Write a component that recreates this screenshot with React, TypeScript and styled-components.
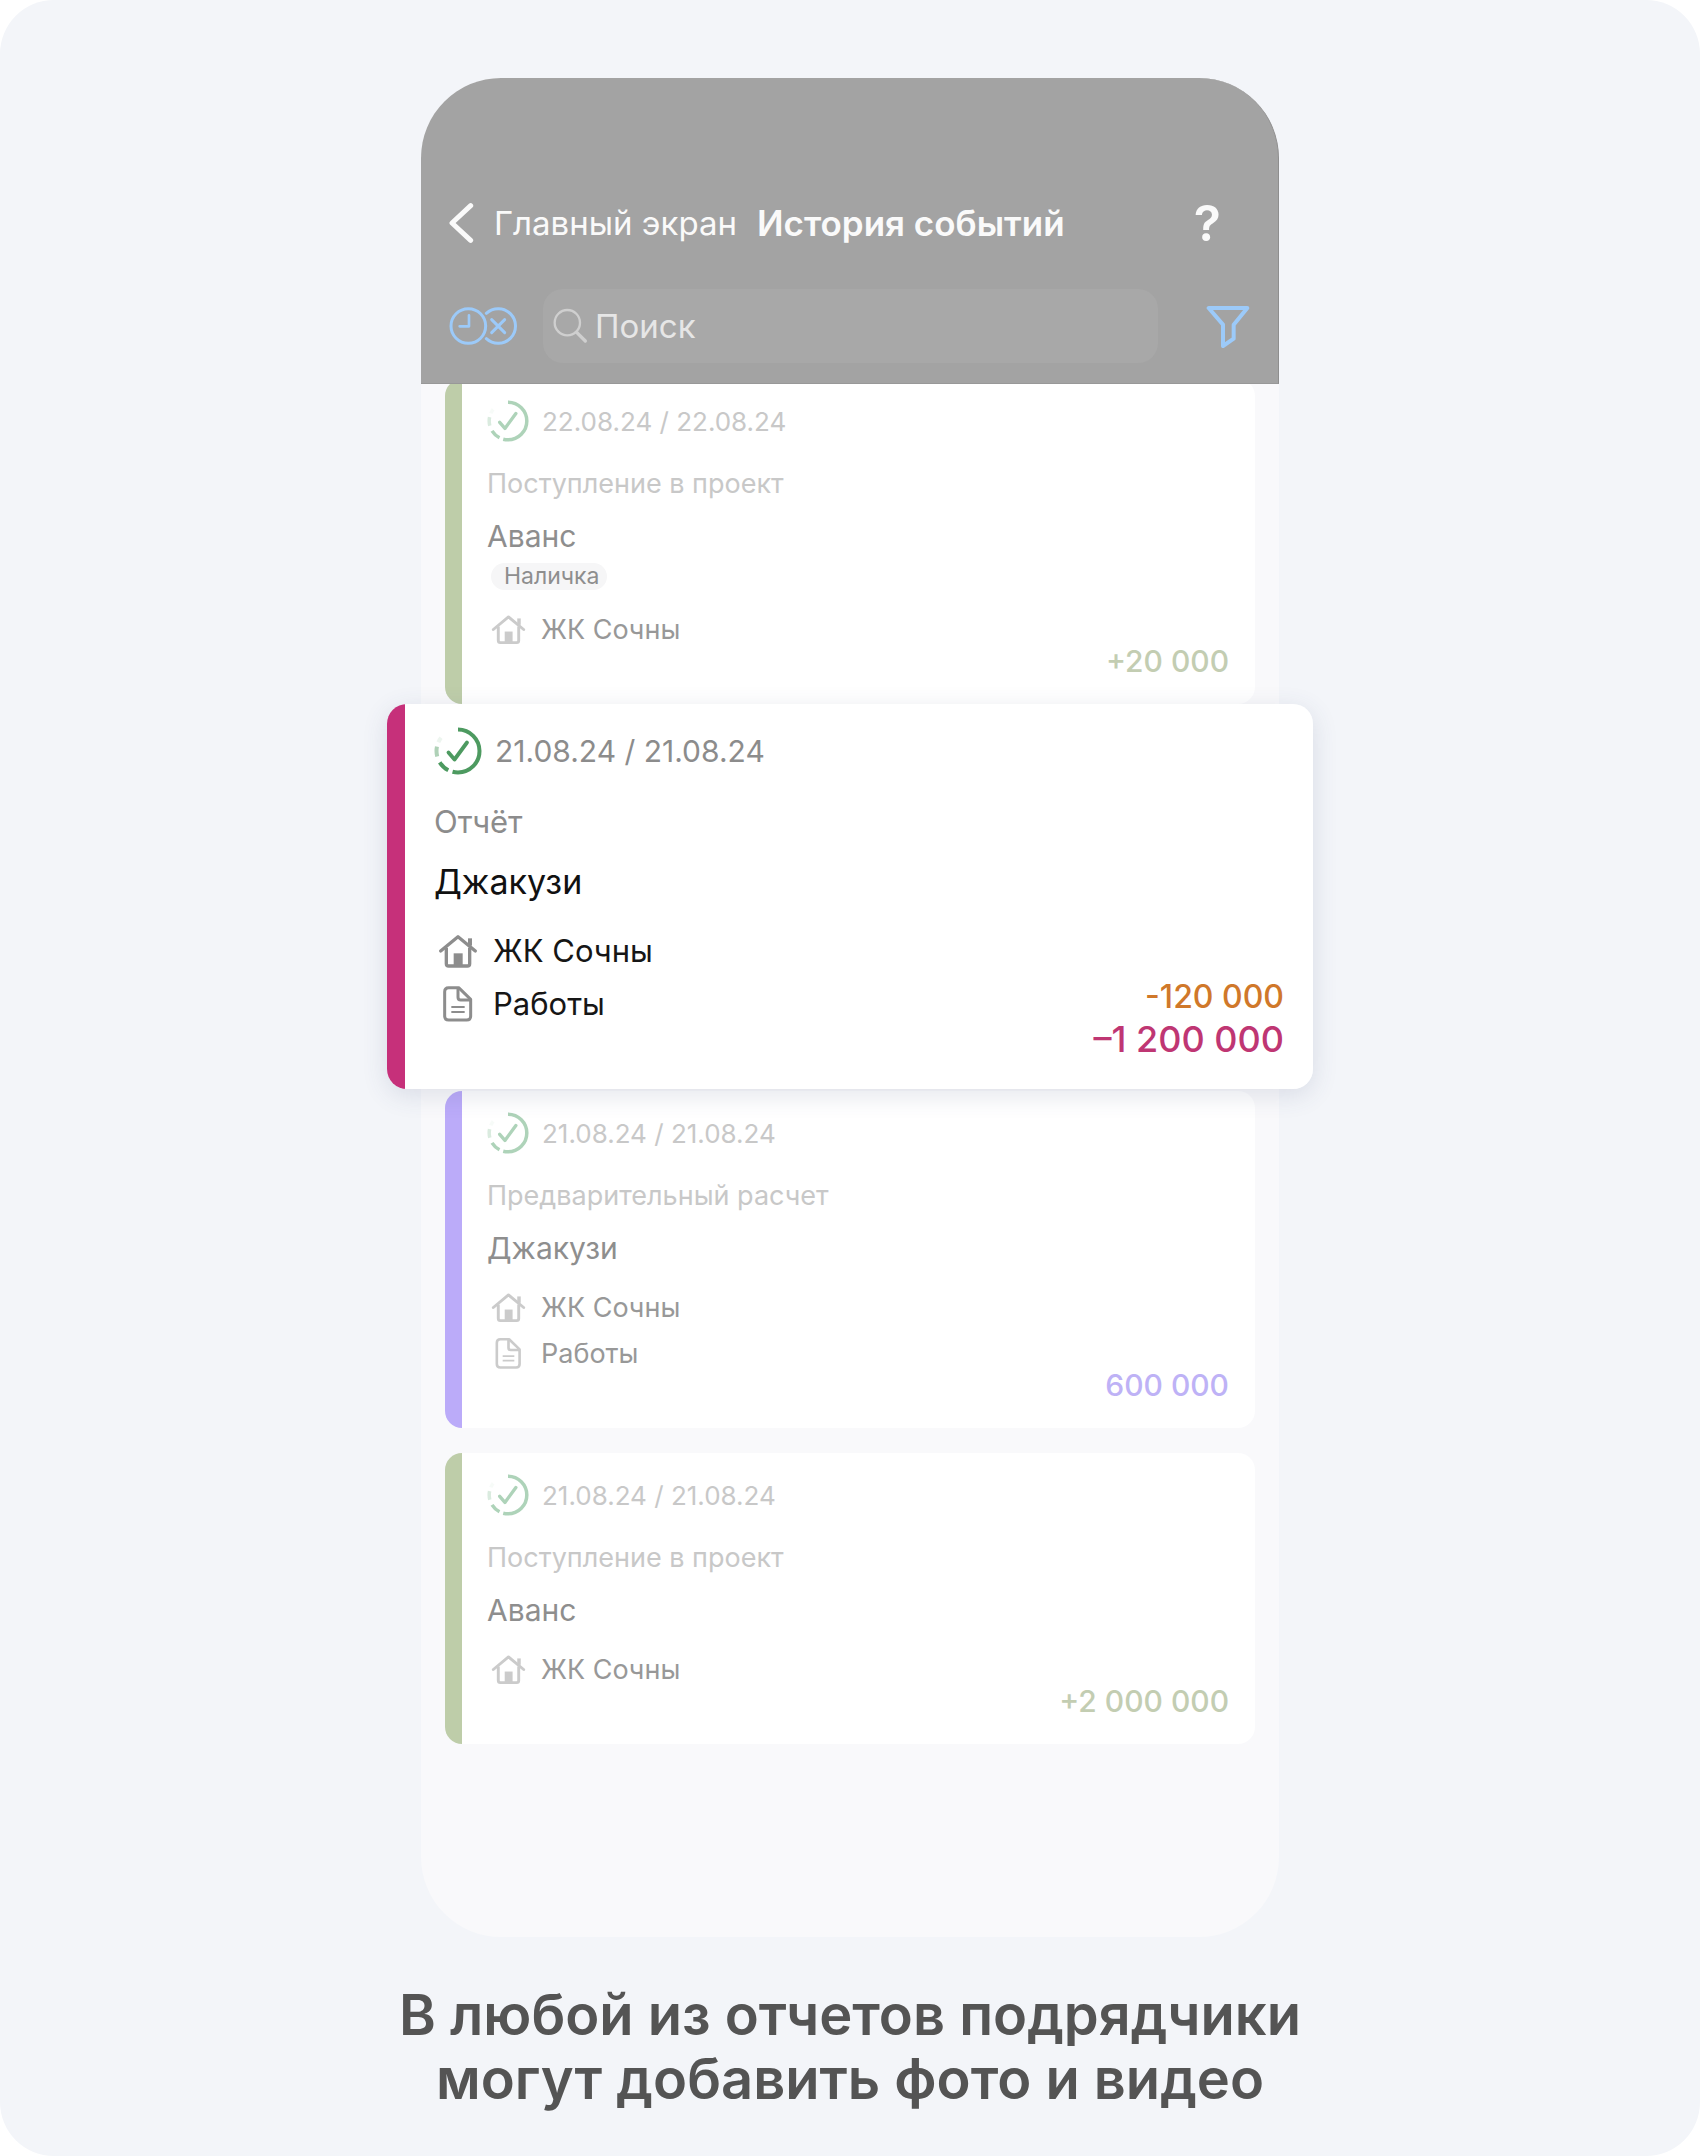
import React from "react";
import styled, { createGlobalStyle, css } from "styled-components";

const GlobalStyle = createGlobalStyle`
  *, *::before, *::after { box-sizing: border-box; }
  body {
    margin: 0;
    background: #ffffff;
    font-family: Inter, "Noto Sans", "Liberation Sans", sans-serif;
  }
  h1, h2, p, ul { margin: 0; padding: 0; }
  ul { list-style: none; }
  button { padding: 0; border: 0; background: none; color: inherit; font: inherit; cursor: pointer; }
  svg { display: block; flex: none; }
`;

const Page = styled.main`
  min-height: 100vh;
  padding: 78px 24px 44px;
  border-radius: 54px;
  background: #f3f5f9;
`;

const Phone = styled.section`
  max-width: 858px;
  margin: 0 auto;
  border-radius: 80px;
  background: #f9f9fb;
`;

const Header = styled.header`
  position: relative;
  z-index: 1;
  padding: 115px 28px 20px;
  border-right: 1px solid #8e8e8e;
  border-bottom: 1px solid #989898;
  border-radius: 80px 80px 0 0;
  background: #a3a3a3;
  color: #fafafa;
`;

const TitleBar = styled.div`
  display: flex;
  align-items: center;
  height: 60px;
  margin-bottom: 36px;
  padding-right: 29px;
  font-size: 33px;
  line-height: 44px;
`;

const BackLink = styled.a`
  display: flex;
  align-items: center;
  gap: 19px;
  margin-right: 20px;
  color: inherit;
  text-decoration: none;
`;

const Title = styled.h1`
  font-size: 35px;
  font-weight: 600;
`;

const HelpButton = styled.button`
  margin-left: auto;
  font-size: 50px;
  font-weight: 600;
`;

const SearchBar = styled.div`
  display: flex;
  align-items: center;
  color: #9ccaf9;
`;

const SearchField = styled.label`
  display: flex;
  flex: 1;
  align-items: center;
  gap: 6px;
  min-width: 0;
  height: 74px;
  margin: 0 48px 0 24px;
  padding: 0 10px;
  border-radius: 20px;
  background: #a8a8a8;
  color: #cfcfcf;
`;

const SearchInput = styled.input`
  flex: 1;
  min-width: 0;
  padding: 0;
  border: 0;
  outline: 0;
  background: transparent;
  color: #fafafa;
  font: inherit;
  font-size: 33px;
  line-height: 44px;

  &::placeholder {
    color: #e6e6e6;
    opacity: 1;
  }
`;

const Feed = styled.ul`
  margin-top: -5px;
  padding: 0 24px 168px;
`;

const Card = styled.li<{ $featured?: boolean; $accent: string }>`
  --bar: 17px;
  --date: 26px;
  --kind: 27px;
  --title: 30px;
  --row: 27px;
  --amount: 30px;
  --status: 42px;
  --icon: 35px;
  --line: 40px;
  --row-line: 46px;
  --amount-line: 36px;
  --gap-l: 21px;
  --gap-m: 12px;
  --gap-s: 16px;
  --foot: 27px;
  --muted: #c8c8c8;
  --text: #989898;
  --strong: #8e8e8e;
  --green: #aed3b9;
  --glyph: #cbcbcb;
  margin-bottom: 25px;
  padding: 20px 26px 25px 42px;
  border-radius: 17px;
  background: linear-gradient(to right, ${(p) => p.$accent} var(--bar), #ffffff var(--bar));

  ${(p) =>
    p.$featured &&
    css`
      --bar: 18px;
      --date: 30px;
      --kind: 31px;
      --title: 34px;
      --row: 31px;
      --amount: 36px;
      --status: 48px;
      --icon: 40px;
      --line: 46px;
      --row-line: 53px;
      --amount-line: 42px;
      --gap-l: 23px;
      --gap-m: 14px;
      --gap-s: 19px;
      --foot: 30px;
      --muted: #8c8c8c;
      --text: #161616;
      --strong: #111111;
      --green: #4d9a60;
      --glyph: #8d8d8d;
      position: relative;
      margin: -25px -58px 2px;
      padding: 22px 29px 29px 47px;
      border-radius: 20px;
      box-shadow: 0 6px 26px rgba(60, 70, 110, 0.14);
    `}
`;

const DateLine = styled.div`
  display: flex;
  align-items: center;
  gap: 13px;
  height: calc(var(--line) + 4px);
  color: var(--muted);
  font-size: var(--date);
`;

const Kind = styled.p`
  margin-top: var(--gap-l);
  color: var(--muted);
  font-size: var(--kind);
  line-height: var(--line);
`;

const CardTitle = styled.h2`
  margin-top: var(--gap-m);
  color: var(--strong);
  font-size: var(--title);
  font-weight: 400;
  line-height: var(--line);
`;

const Tag = styled.span`
  display: block;
  width: fit-content;
  margin: 7px 0 3px 4px;
  padding: 0 7px 0 13px;
  border-radius: 14px;
  background: #f6f6f7;
  color: var(--strong);
  font-size: 23px;
  line-height: 27px;
`;

const CardFoot = styled.div`
  display: flex;
  align-items: flex-end;
  justify-content: space-between;
  margin-top: var(--gap-s);
`;

const Details = styled.ul`
  padding: 0 0 var(--foot) 4px;
`;

const Detail = styled.li`
  display: flex;
  align-items: center;
  gap: 15px;
  height: var(--row-line);
  color: var(--text);
  font-size: var(--row);
`;

const Amounts = styled.div`
  text-align: right;
  line-height: var(--amount-line);
  font-weight: 500;
`;

const Amount = styled.p<{ $tone: string; $small?: boolean }>`
  color: ${(p) => p.$tone};
  font-size: ${(p) => (p.$small ? "32px" : "var(--amount)")};
`;

const Caption = styled.p`
  margin-top: 46px;
  color: #545454;
  font-size: 56px;
  font-weight: 600;
  line-height: 64px;
  text-align: center;
`;

const StatusSvg = styled.svg`
  width: var(--status);
  height: var(--status);
  color: var(--green);
`;

const GlyphSvg = styled.svg`
  width: var(--icon);
  height: var(--icon);
  color: var(--glyph);
`;

const StatusIcon = () => (
  <StatusSvg viewBox="0 0 48 48" fill="none" stroke="currentColor" aria-hidden="true">
    <g strokeWidth="4" transform="rotate(-90 24 24)">
      <circle cx="24" cy="24" r="21.5" pathLength="360" strokeDasharray="195 12 31 360" />
      <circle cx="24" cy="24" r="21.5" pathLength="360" strokeDasharray="0 255 27 360" strokeOpacity="0.45" />
      <circle cx="24" cy="24" r="21.5" pathLength="360" strokeDasharray="0 294 14 360" strokeOpacity="0.1" />
    </g>
    <path d="M14.5 25.5 20.5 32.5 33 15.5" strokeWidth="3.8" strokeLinecap="round" strokeLinejoin="round" />
  </StatusSvg>
);

const HouseIcon = () => (
  <GlyphSvg viewBox="0 0 120 120" fill="none" stroke="currentColor" strokeWidth="10" aria-hidden="true">
    <path d="M8 60 60 17 112 60" strokeLinecap="round" strokeLinejoin="round" />
    <path d="M25 50V98Q25 105 32 105H88Q95 105 95 98V50" />
    <path d="M96 22V44" strokeWidth="12" />
    <rect x="47" y="67" width="27" height="38" fill="currentColor" stroke="none" />
  </GlyphSvg>
);

const DocumentIcon = () => (
  <GlyphSvg viewBox="0 0 120 120" fill="none" stroke="currentColor" strokeWidth="9" strokeLinejoin="round" aria-hidden="true">
    <path d="M62 11H32Q20 11 20 23V96Q20 108 32 108H86Q98 108 98 96V46Z" />
    <path d="M60 12V40Q60 48 68 48H97" />
    <path d="M40 69H80M40 84H80" strokeWidth="6" />
  </GlyphSvg>
);

const ChevronIcon = () => (
  <svg width="26" height="42" viewBox="0 0 78 126" fill="none" stroke="currentColor" strokeWidth="15" strokeLinecap="round" strokeLinejoin="round" aria-hidden="true">
    <path d="M65 11 9 63 65 115" />
  </svg>
);

const ScheduleIcon = () => (
  <svg width="70" height="40" viewBox="0 0 210 120" fill="none" stroke="currentColor" strokeWidth="9" strokeLinecap="round" strokeLinejoin="round" aria-hidden="true">
    <circle cx="58" cy="60" r="52" />
    <path d="M60 28V61H32" strokeWidth="8" />
    <path d="M112 22A52 52 0 1 1 112 98" />
    <path d="M128 41 167 80M167 41 128 80" />
  </svg>
);

const SearchIcon = () => (
  <svg width="36" height="36" viewBox="0 0 108 108" fill="none" stroke="currentColor" strokeWidth="7" strokeLinecap="round" aria-hidden="true">
    <circle cx="43" cy="44" r="38" />
    <path d="M71 73 97 99" strokeWidth="10" />
  </svg>
);

const FilterIcon = () => (
  <svg width="44" height="44" viewBox="0 0 132 132" fill="none" stroke="currentColor" strokeWidth="12" strokeLinejoin="round" aria-hidden="true">
    <path d="M8 12H124L83 62V104L51 126V62Z" />
  </svg>
);

type Entry = {
  dates: string;
  kind: string;
  title: string;
  tag?: string;
  work?: string;
  accent: string;
  featured?: boolean;
  amounts: { value: string; tone: string; small?: boolean }[];
};

const entries: Entry[] = [
  {
    dates: "22.08.24 / 22.08.24",
    kind: "Поступление в проект",
    title: "Аванс",
    tag: "Наличка",
    accent: "#becda9",
    amounts: [{ value: "+20 000", tone: "#c3cdb2" }],
  },
  {
    dates: "21.08.24 / 21.08.24",
    kind: "Отчёт",
    title: "Джакузи",
    work: "Работы",
    accent: "#c6307a",
    featured: true,
    amounts: [
      { value: "-120 000", tone: "#d0782a", small: true },
      { value: "–1 200 000", tone: "#bf3673" },
    ],
  },
  {
    dates: "21.08.24 / 21.08.24",
    kind: "Предварительный расчет",
    title: "Джакузи",
    work: "Работы",
    accent: "#bbabf9",
    amounts: [{ value: "600 000", tone: "#beb2f6" }],
  },
  {
    dates: "21.08.24 / 21.08.24",
    kind: "Поступление в проект",
    title: "Аванс",
    accent: "#becda9",
    amounts: [{ value: "+2 000 000", tone: "#c3cdb2" }],
  },
];

const EventCard = ({ entry }: { entry: Entry }) => (
  <Card $accent={entry.accent} $featured={entry.featured}>
    <DateLine>
      <StatusIcon />
      <span>{entry.dates}</span>
    </DateLine>
    <Kind>{entry.kind}</Kind>
    <CardTitle>{entry.title}</CardTitle>
    {entry.tag && <Tag>{entry.tag}</Tag>}
    <CardFoot>
      <Details>
        <Detail>
          <HouseIcon />
          <span>ЖК Сочны</span>
        </Detail>
        {entry.work && (
          <Detail>
            <DocumentIcon />
            <span>{entry.work}</span>
          </Detail>
        )}
      </Details>
      <Amounts>
        {entry.amounts.map((a) => (
          <Amount key={a.value} $tone={a.tone} $small={a.small}>
            {a.value}
          </Amount>
        ))}
      </Amounts>
    </CardFoot>
  </Card>
);

export default function App() {
  return (
    <>
      <GlobalStyle />
      <Page>
        <Phone>
          <Header>
            <TitleBar>
              <BackLink href="#main">
                <ChevronIcon />
                <span>Главный экран</span>
              </BackLink>
              <Title>История событий</Title>
              <HelpButton type="button">?</HelpButton>
            </TitleBar>
            <SearchBar>
              <button type="button" aria-label="Период">
                <ScheduleIcon />
              </button>
              <SearchField htmlFor="search">
                <SearchIcon />
                <SearchInput id="search" type="text" placeholder="Поиск" aria-label="Поиск" />
              </SearchField>
              <button type="button" aria-label="Фильтр">
                <FilterIcon />
              </button>
            </SearchBar>
          </Header>
          <Feed>
            {entries.map((entry, i) => (
              <EventCard key={i} entry={entry} />
            ))}
          </Feed>
        </Phone>
        <Caption>
          В любой из отчетов подрядчики
          <br />
          могут добавить фото и видео
        </Caption>
      </Page>
    </>
  );
}
